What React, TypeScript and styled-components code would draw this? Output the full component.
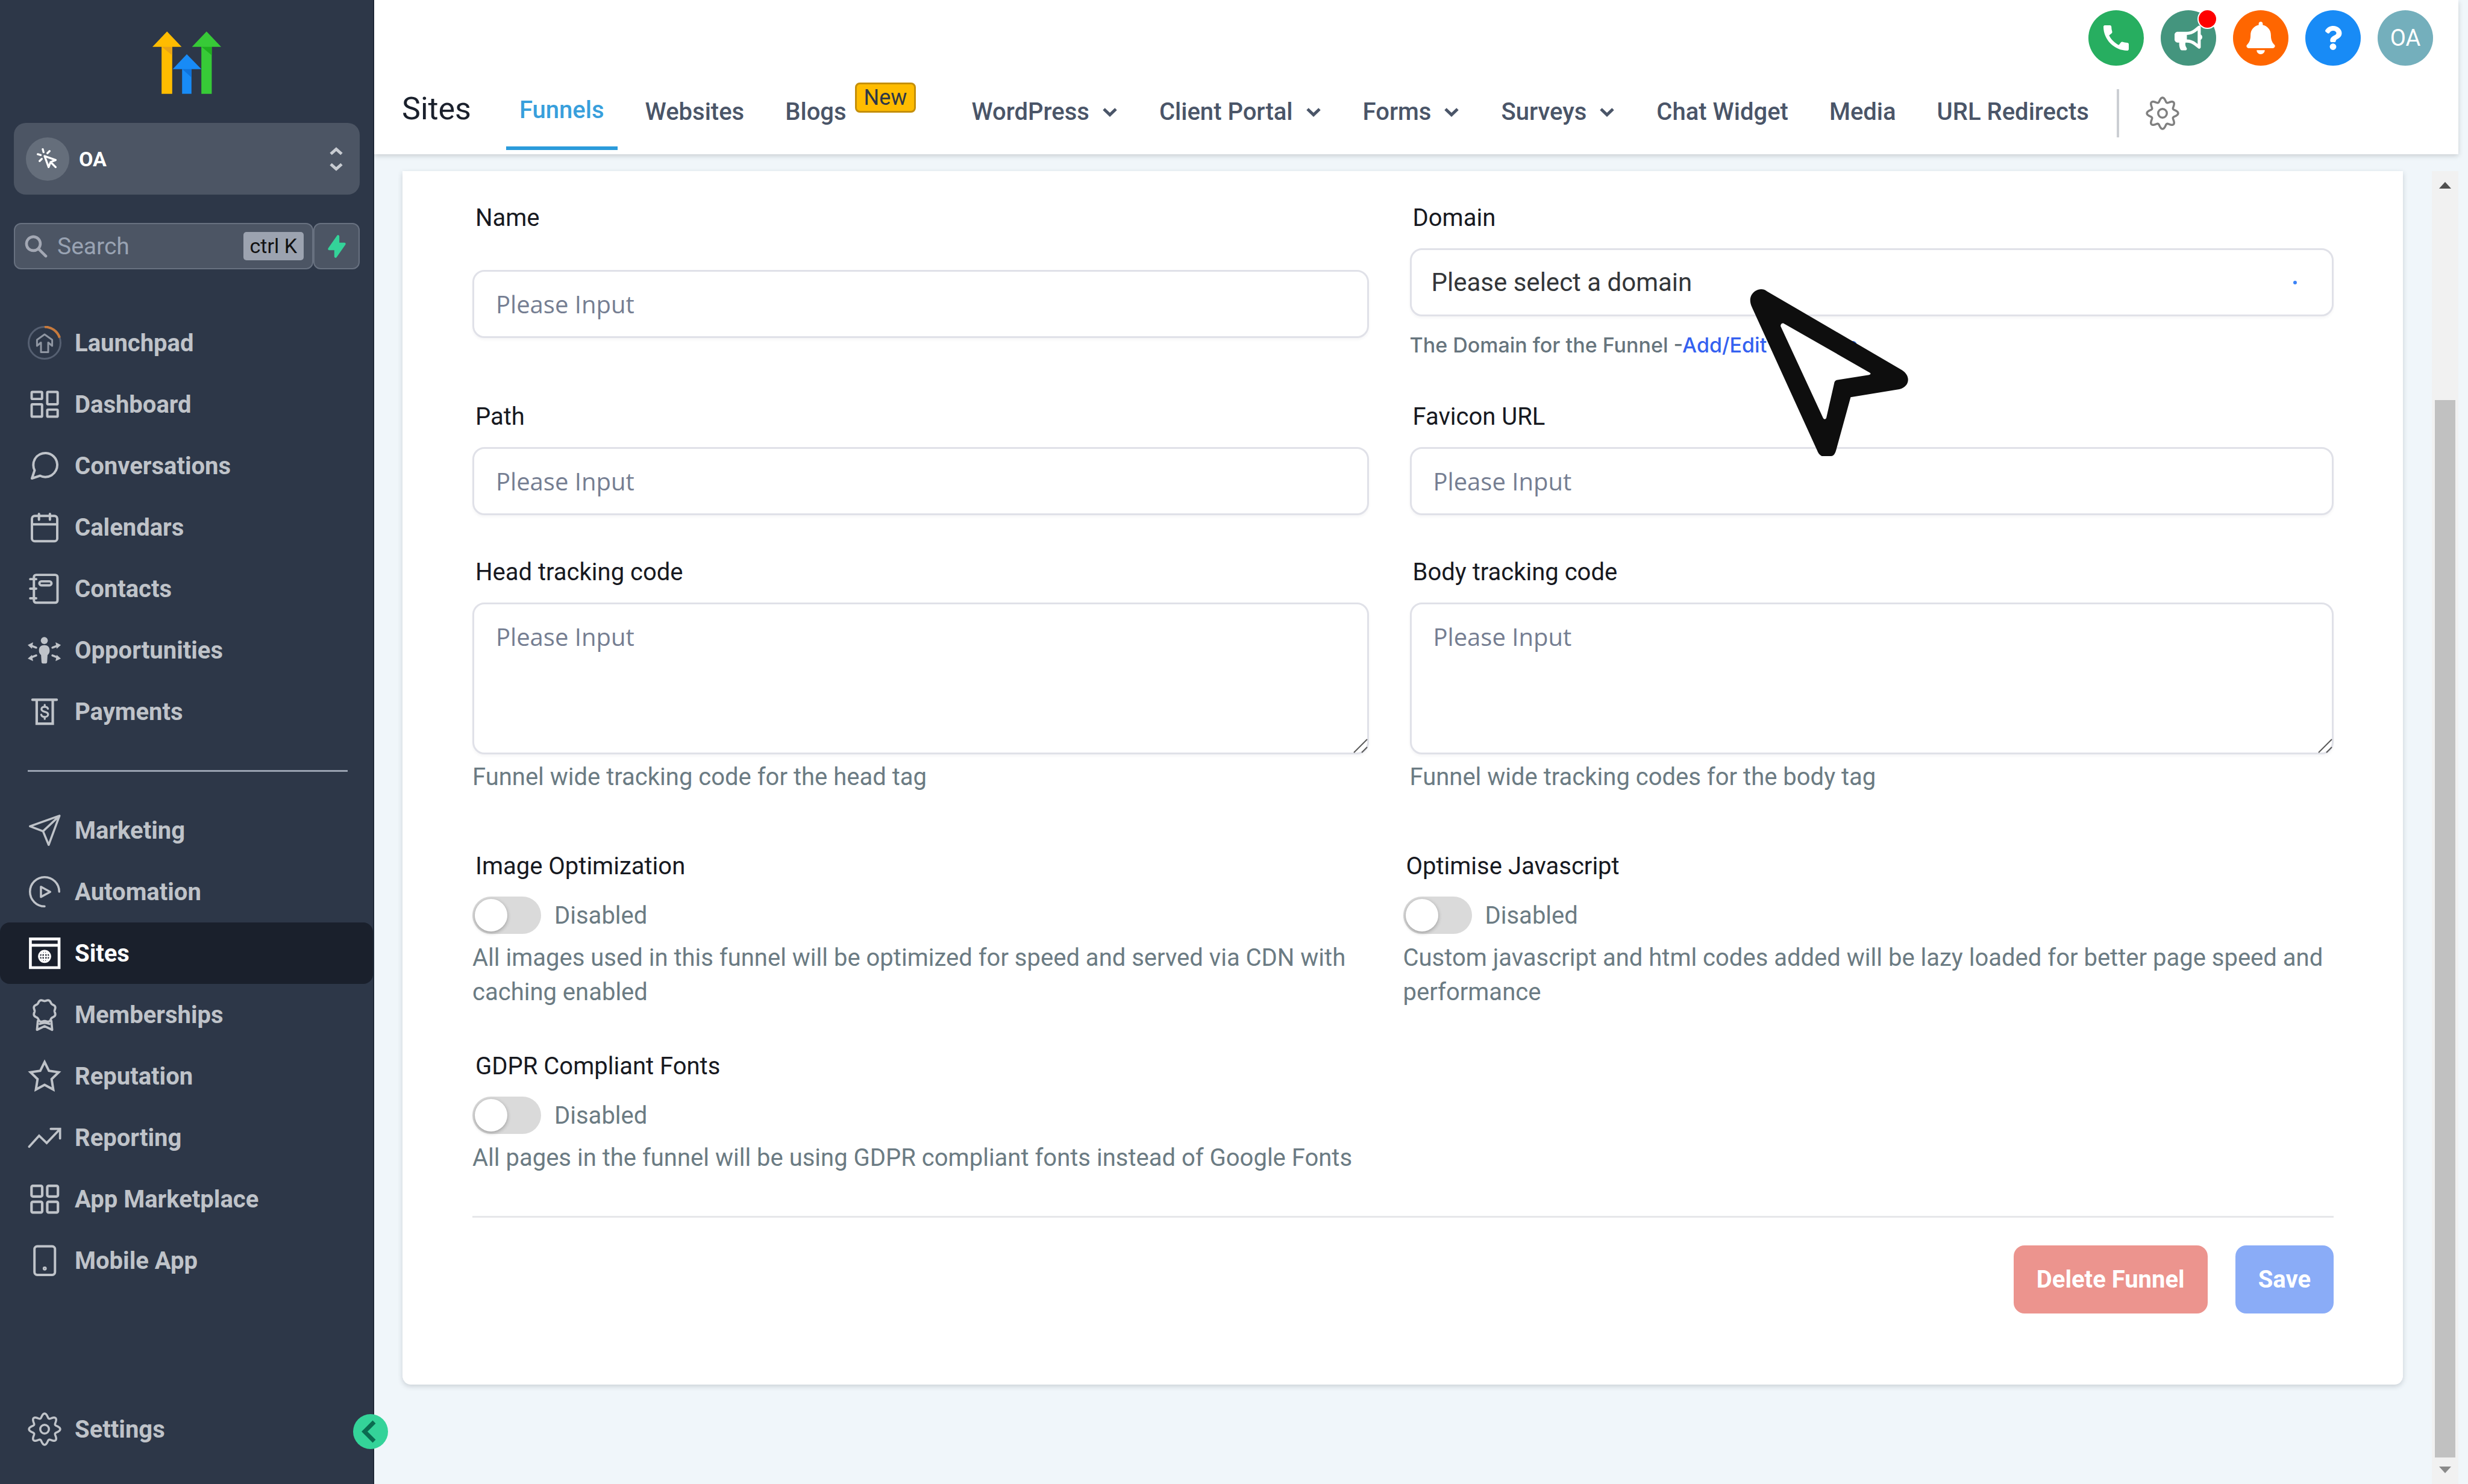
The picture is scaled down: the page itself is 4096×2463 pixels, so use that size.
import React from "react";
import styled, { createGlobalStyle, css } from "styled-components";
import { HiOutlineCursorClick, HiSearch, HiLightningBolt } from "react-icons/hi";
import { MdCall } from "react-icons/md";
import { FaBullhorn, FaBell, FaQuestion } from "react-icons/fa";

const Global = createGlobalStyle`
  *, *::before, *::after { box-sizing: border-box; }
  body {
    margin: 0;
    background: #f0f6fa;
    font-family: Roboto, "Liberation Sans", sans-serif;
    color: #1a202c;
  }
  button, input, select, textarea { font: inherit; margin: 0; }
  a { color: inherit; text-decoration: none; }
`;

/* ---------- shell ---------- */

const Shell = styled.div`
  display: flex;
  min-height: 100vh;
`;

const Sidebar = styled.aside`
  position: relative;
  z-index: 2;
  display: flex;
  flex-direction: column;
  flex: 0 0 621px;
  min-width: 0;
  padding: 52px 0 40px;
  background: #2d3748;
  border-right: 2px solid #1f2937;
`;

const LogoLink = styled.a`
  display: flex;
  justify-content: center;
  height: 104px;
`;

const SidebarTools = styled.div`
  display: flex;
  flex-direction: column;
  gap: 47px;
  padding: 48px 22px 71px 23px;
`;

const AccountButton = styled.button`
  display: flex;
  align-items: center;
  gap: 16px;
  height: 119px;
  padding: 0 26px 0 20px;
  border: 0;
  border-radius: 20px;
  background: #4c5564;
  color: #fff;
  font-size: 34px;
  font-weight: 700;
`;

const AccountAvatar = styled.span`
  display: grid;
  place-items: center;
  width: 72px;
  height: 72px;
  border-radius: 50%;
  background: #656e7b;
`;

const AccountName = styled.span`
  flex: 1;
  text-align: left;
`;

const SearchRow = styled.div`
  display: flex;
  height: 77px;
`;

const SearchBox = styled.label`
  display: flex;
  align-items: center;
  gap: 12px;
  flex: 1;
  min-width: 0;
  padding: 0 14px 0 12px;
  border: 2px solid #687180;
  border-radius: 12px;
  background: #4c5564;
  color: #a3a8b4;
  svg { flex: none; }
`;

const SearchInput = styled.input`
  flex: 1;
  width: 100%;
  min-width: 0;
  padding: 0;
  border: 0;
  outline: 0;
  background: transparent;
  color: #fff;
  font-size: 39px;
  &::placeholder { color: #99a3b3; opacity: 1; }
`;

const Shortcut = styled.kbd`
  flex: none;
  padding: 0 11px;
  border-radius: 5px;
  background: #9ca3b0;
  color: #111;
  font-family: inherit;
  font-size: 34px;
  line-height: 47px;
`;

const QuickButton = styled.button`
  display: grid;
  place-items: center;
  width: 77px;
  padding: 0;
  border: 2px solid #687180;
  border-radius: 12px;
  background: #4c5564;
  color: #34d399;
`;

const NavList = styled.nav`
  display: flex;
  flex-direction: column;
`;

const NavLink = styled.a<{ $active?: boolean }>`
  display: flex;
  align-items: center;
  gap: 22px;
  height: 102px;
  padding-left: 46px;
  border-radius: 16px;
  color: #bfc3c9;
  font-size: 40px;
  font-weight: 700;
  ${(p) => p.$active && css`
    background: #1a202c;
    color: #fff;
  `}
`;

const NavDivider = styled.hr`
  height: 3px;
  margin: 46px 42px 46px 46px;
  border: 0;
  background: #98a1b0;
`;

const SidebarFooter = styled.div`
  margin-top: auto;
`;

const CollapseButton = styled.button`
  position: absolute;
  right: -25px;
  bottom: 58px;
  display: grid;
  place-items: center;
  width: 58px;
  height: 58px;
  padding: 0;
  border: 0;
  border-radius: 50%;
  background: #34d399;
`;

/* ---------- header ---------- */

const Main = styled.div`
  display: flex;
  flex-direction: column;
  flex: 1;
  min-width: 0;
  margin-right: 16px;
`;

const Header = styled.header`
  position: relative;
  z-index: 1;
  padding: 17px 0 7px 46px;
  background: #fff;
  box-shadow: 0 3px 8px rgba(0, 0, 0, 0.16);
`;

const HeaderActions = styled.div`
  display: flex;
  justify-content: flex-end;
  gap: 28px;
  padding-right: 42px;
`;

const RoundButton = styled.button<{ $bg: string }>`
  position: relative;
  display: grid;
  place-items: center;
  width: 92px;
  height: 92px;
  padding: 0;
  border: 0;
  border-radius: 50%;
  background: ${(p) => p.$bg};
  color: #fff;
  font-size: 38px;
`;

const AlertDot = styled.span`
  position: absolute;
  top: -2px;
  right: -2px;
  width: 33px;
  height: 33px;
  border: 2px solid #fff;
  border-radius: 50%;
  background: #f00;
`;

const TabBar = styled.div`
  display: flex;
  align-items: flex-end;
  height: 140px;
`;

const Title = styled.h1`
  margin: 0 58px 0 0;
  font-size: 52px;
  font-weight: 400;
  line-height: 136px;
`;

const Tabs = styled.nav`
  display: flex;
  gap: 24px;
`;

const Tab = styled.a<{ $active?: boolean }>`
  display: flex;
  align-items: center;
  height: 128px;
  padding: 0 22px;
  color: #4a5568;
  font-size: 40px;
  font-weight: 500;
  white-space: nowrap;
  ${(p) => p.$active && css`
    border-bottom: 6px solid #2b9bdb;
    color: #389fdc;
  `}
`;

const TabCaret = styled.svg`
  width: 28px;
  height: 28px;
  margin-left: 20px;
`;

const TabGroup = styled.div`
  display: flex;
  padding-right: 46px;
`;

const NewBadge = styled.span`
  align-self: flex-start;
  margin-top: 16px;
  margin-left: -8px;
  padding: 0 12px;
  border: 3px solid #c58f09;
  border-radius: 8px;
  background: #ffbc00;
  color: #2d3748;
  font-size: 36px;
  line-height: 44px;
`;

const TabSettings = styled.button`
  display: flex;
  align-items: center;
  height: 80px;
  margin: 0 0 21px 24px;
  padding: 0 0 0 44px;
  border: 0;
  border-left: 4px solid #cbced3;
  background: transparent;
  color: #808080;
`;

/* ---------- content ---------- */

const Content = styled.div`
  display: flex;
  flex: 1;
  gap: 48px;
  padding: 28px 0 0 47px;
`;

const Card = styled.form`
  flex: 1;
  min-width: 0;
  align-self: flex-start;
  padding: 50px 115px 118px 116px;
  border-radius: 0 0 14px 14px;
  background: #fff;
  box-shadow: 0 3px 8px rgba(45, 55, 72, 0.2);
`;

const FieldGrid = styled.div`
  display: grid;
  grid-template-columns: 1fr 1fr;
  row-gap: 67px;
`;

const SwitchGrid = styled(FieldGrid)`
  margin-top: 92px;
`;

const Field = styled.div<{ $side: "left" | "right" }>`
  display: flex;
  flex-direction: column;
  ${(p) => (p.$side === "left" ? "padding-right: 57px;" : "padding-left: 11px;")}
`;

const FieldLabel = styled.label<{ $roomy?: boolean }>`
  margin-bottom: ${(p) => (p.$roomy ? 58 : 22)}px;
  padding-left: 5px;
  color: #17191f;
  font-size: 40px;
  line-height: 56px;
`;

const control = css`
  width: 100%;
  border: 3px solid #e0e1e8;
  border-radius: 20px;
  background: #fff;
  box-shadow: 0 3px 4px rgba(16, 24, 40, 0.04);
`;

const TextInput = styled.input`
  ${control}
  height: 113px;
  padding: 0 36px;
  outline: 0;
  font-family: "Open Sans", "Noto Sans", sans-serif;
  font-size: 40px;
  &::placeholder { color: #757e92; opacity: 1; }
`;

const AreaWrap = styled.div`
  position: relative;
  display: flex;
`;

const TextArea = styled.textarea`
  ${control}
  height: 252px;
  padding: 26px 36px;
  outline: 0;
  resize: none;
  font-family: "Open Sans", "Noto Sans", sans-serif;
  font-size: 40px;
  line-height: 56px;
  &::placeholder { color: #757e92; opacity: 1; }
`;

const AreaGrip = styled.svg`
  position: absolute;
  right: 2px;
  bottom: 2px;
  width: 24px;
  height: 24px;
`;

const SelectWrap = styled.div`
  ${control}
  position: relative;
  display: flex;
  align-items: center;
  height: 113px;
  padding: 0 58px 0 33px;
`;

const Select = styled.select`
  flex: 1;
  height: 100%;
  padding: 0;
  border: 0;
  outline: 0;
  appearance: none;
  background: transparent;
  color: #333639;
  font-size: 42px;
`;

const LoadingDot = styled.span`
  width: 6px;
  height: 6px;
  border-radius: 3px;
  background: #3b82f6;
`;

const Pointer = styled.svg`
  position: absolute;
  z-index: 3;
  top: 65px;
  left: 561px;
  width: 263px;
  height: 277px;
  pointer-events: none;
`;

const Hint = styled.p`
  margin: 9px 0 0;
  color: #6b7b83;
  font-size: 40px;
  line-height: 57px;
`;

const SmallHint = styled.p`
  margin: 24px 0 0;
  color: #66747d;
  font-family: Inter, Roboto, sans-serif;
  font-size: 34px;
  font-weight: 500;
  line-height: 48px;
`;

const HintLink = styled.a`
  color: #3461f0;
`;

const SwitchField = styled.div`
  display: flex;
  flex-direction: column;
`;

const SwitchRow = styled.label`
  display: flex;
  align-items: center;
  gap: 22px;
  height: 62px;
  margin-bottom: 2px;
  color: #6b7b83;
  font-size: 40px;
`;

const SwitchInput = styled.input`
  appearance: none;
  width: 114px;
  height: 62px;
  padding: 4px;
  border-radius: 31px;
  background: #dadada;
  &::before {
    content: "";
    display: block;
    width: 54px;
    height: 54px;
    border-radius: 50%;
    background: #fff;
    box-shadow: 0 2px 6px rgba(0, 0, 0, 0.3);
  }
`;

const Actions = styled.div`
  display: flex;
  justify-content: flex-end;
  gap: 46px;
  margin-top: 68px;
  padding-top: 46px;
  border-top: 3px solid #e6e7ea;
`;

const ActionButton = styled.button<{ $bg: string }>`
  height: 113px;
  padding: 0 38px;
  border: 0;
  border-radius: 18px;
  background: ${(p) => p.$bg};
  color: #fff;
  font-size: 40px;
  font-weight: 700;
`;

const ScrollTrack = styled.div`
  display: flex;
  flex-direction: column;
  align-items: center;
  width: 44px;
  background: #f1f1f1;
`;

const ScrollArrow = styled.svg`
  flex: 0 0 44px;
  width: 44px;
`;

const ScrollGap = styled.div`
  flex: 336;
`;

const ScrollThumb = styled.div`
  flex: 1756;
  width: 34px;
  background: #c1c1c1;
`;

/* ---------- drawings ---------- */

const wave = (cx: number, cy: number, base: number, amp: number, lobes: number, phase = 0) => {
  const pts: string[] = [];
  for (let i = 0; i < 240; i++) {
    const t = (i / 240) * Math.PI * 2;
    const r = base + amp * Math.cos(lobes * t + phase);
    pts.push(`${(cx + r * Math.sin(t)).toFixed(2)} ${(cy - r * Math.cos(t)).toFixed(2)}`);
  }
  return `M${pts.join("L")}Z`;
};

const Gear = ({ size }: { size: number }) => (
  <svg width={size} height={size} viewBox="0 0 24 24" fill="none" stroke="currentColor" strokeWidth="1.5" strokeLinejoin="round">
    <path d={wave(12, 12, 9.6, 1.5, 8)} />
    <circle cx="12" cy="12" r="3.1" />
  </svg>
);

const Icon = ({ children, sw = 1.7 }: { children: React.ReactNode; sw?: number }) => (
  <svg
    width="56"
    height="56"
    viewBox="0 0 24 24"
    fill="none"
    stroke="currentColor"
    strokeWidth={sw}
    strokeLinecap="round"
    strokeLinejoin="round"
    overflow="visible"
  >
    {children}
  </svg>
);

const icons: Record<string, React.ReactNode> = {
  launchpad: (
    <svg width="56" height="56" viewBox="0 0 56 56" fill="none" strokeWidth="3">
      <circle cx="28" cy="28" r="26.5" stroke="#566072" />
      <path d="M28 1.5A26.5 26.5 0 0 1 53 19.5" stroke="#c87a3c" strokeWidth="4" />
      <path d="M28 14L40.6 23V33L34 27.5V43.5H22V27.5L15.4 33V23Z" stroke="#8f96a2" strokeLinejoin="round" />
    </svg>
  ),
  dashboard: (
    <Icon>
      <rect x="2.8" y="3.2" width="7.4" height="5" rx=".6" />
      <rect x="13.9" y="3.2" width="7.4" height="8.8" rx=".6" />
      <rect x="2.8" y="12" width="7.4" height="8.8" rx=".6" />
      <rect x="13.9" y="15.8" width="7.4" height="5" rx=".6" />
    </Icon>
  ),
  conversations: (
    <Icon>
      <path d="M21 11.5a8.38 8.38 0 0 1-.9 3.8 8.5 8.5 0 0 1-7.6 4.7 8.38 8.38 0 0 1-3.8-.9L3 21l1.9-5.7a8.38 8.38 0 0 1-.9-3.8 8.5 8.5 0 0 1 4.7-7.6 8.38 8.38 0 0 1 3.8-.9h.5a8.48 8.48 0 0 1 8 8v.5z" />
    </Icon>
  ),
  calendars: (
    <Icon>
      <rect x="3" y="4" width="18" height="18" rx="2" />
      <path d="M8 2.6v4M15.8 2.6v4M3 10h18" />
    </Icon>
  ),
  contacts: (
    <Icon>
      <rect x="4.4" y="2.2" width="16.8" height="19.8" rx="1.6" />
      <path d="M1.8 5.2h4.2M1.8 12h4.2M1.8 18.9h4.2" />
      <rect x="8.3" y="6.8" width="8.6" height="2.8" rx="1.4" />
    </Icon>
  ),
  opportunities: (
    <Icon sw={1.5}>
      <g fill="currentColor" stroke="none">
        <circle cx="11.8" cy="5.2" r="2.5" />
        <path d="M8 12.4c0-2.6 1.4-3.9 3.8-3.9s3.8 1.3 3.8 3.9c0 1.6-.8 2.5-1.5 3.1l-.3 5c0 .6-.4 1-1 1h-2c-.6 0-1-.4-1-1l-.3-5c-.7-.6-1.5-1.5-1.5-3.1z" />
        <path d="M23.6 8.4l-3.8-2 .8 4.6zM0 8.4l3.8-2-.8 4.6zM23.6 18l-3.8 1.8.8-4.4zM0 18l3.8 1.8-.8-4.4z" />
      </g>
      <path d="M17.6 10.2l3.6-1.4M6 10.2L2.4 8.8M17.6 15.8l3.6 1.4M6 15.8l-3.6 1.4" />
    </Icon>
  ),
  payments: (
    <Icon sw={1.8}>
      <path d="M3.4 3.6h17.2M6.4 3.6v17h11.4v-17" strokeLinejoin="miter" />
      <path d="M14.4 10c-.3-1-1.2-1.4-2.3-1.4-1.3 0-2.3.6-2.3 1.7 0 2.5 4.7 1.2 4.7 3.7 0 1.1-1 1.8-2.4 1.8-1.2 0-2.2-.5-2.5-1.6M12.1 7.2v1.4M12.1 15.8v1.4" strokeWidth="1.4" />
    </Icon>
  ),
  marketing: (
    <Icon sw={1.5}>
      <path d="M22.6 1.7L1.6 9.2l9.3 3.5 4 9.7zM10.9 12.7L22.6 1.7" />
    </Icon>
  ),
  automation: (
    <Icon sw={1.5}>
      <path d="M22.4 12A10.4 10.4 0 1 0 12 22.4" />
      <path d="M9.4 8.5v7.2l6.6-3.6z" />
    </Icon>
  ),
  sites: (
    <Icon sw={2}>
      <path d="M1.9 1.9h20.4v20.4H1.9zM1.9 6.4h20.4" strokeLinejoin="miter" />
      <circle cx="12" cy="14.3" r="4" strokeWidth="1.3" />
      <path d="M8 14.3h8M12 10.3v8M9.4 12.2h5.2M9.4 16.4h5.2" strokeWidth="1" />
      <ellipse cx="12" cy="14.3" rx="2" ry="4" strokeWidth=".8" />
    </Icon>
  ),
  memberships: (
    <Icon sw={1.6}>
      <path d={wave(12, 9.4, 7.6, 0.5, 8, Math.PI)} />
      <path d="M7.2 16.4L6.6 22.8 12 20.2l5.4 2.6-.6-6.4M8.6 18.6c2.2-1 4.6-1 6.8 0" />
    </Icon>
  ),
  reputation: (
    <Icon>
      <path d="M12 2L15.09 8.26 22 9.27 17 14.14 18.18 21.52 12 18.17 5.82 21.52 7 14.14 2 9.27 8.91 8.26Z" strokeLinejoin="miter" />
    </Icon>
  ),
  reporting: (
    <Icon sw={1.6}>
      <path d="M1 18.5L8.1 10.7 13.5 15.9 23 5.9M16.4 5.8H23v6.8" strokeLinejoin="miter" />
    </Icon>
  ),
  apps: (
    <Icon sw={1.8}>
      <rect x="2.7" y="2.6" width="7.6" height="7.6" rx="1" />
      <rect x="13.9" y="2.6" width="7.6" height="7.6" rx="1" />
      <rect x="2.7" y="14" width="7.6" height="7.6" rx="1" />
      <rect x="13.9" y="14" width="7.6" height="7.6" rx="1" />
    </Icon>
  ),
  mobile: (
    <Icon>
      <rect x="4.8" y="1.9" width="14.6" height="20.4" rx="2" />
      <circle cx="12.1" cy="17.7" r=".6" />
    </Icon>
  ),
};

const Logo = () => (
  <svg width="114" height="104" viewBox="0 0 278 252">
    <path d="M59 0L118 62H0Z" fill="#ffbc00" />
    <path d="M37 60H80V252H37Z" fill="#ffbc00" />
    <path d="M38 62H80V96Z" fill="#e8a317" />
    <path d="M219 0L278 62H160Z" fill="#37ca37" />
    <path d="M198 60H240V252H198Z" fill="#37ca37" />
    <path d="M199 62H240V96Z" fill="#1fae1f" />
    <path d="M139 92L198 152H82Z" fill="#188bf6" />
    <path d="M120 150H158V252H120Z" fill="#188bf6" />
    <path d="M121 152H158V186Z" fill="#0f73db" />
  </svg>
);

const Updown = () => (
  <svg width="26" height="46" viewBox="0 0 26 46" fill="none" stroke="#c8ccd2" strokeWidth="5">
    <path d="M4 14.5L13 6.5 22 14.5M4 31.5L13 39.5 22 31.5" />
  </svg>
);

const Caret = () => (
  <TabCaret viewBox="0 0 28 28" fill="none" stroke="currentColor" strokeWidth="5">
    <path d="M4 10L14 19.5 24 10" />
  </TabCaret>
);

/* ---------- page ---------- */

const primary: [string, string][] = [
  ["launchpad", "Launchpad"],
  ["dashboard", "Dashboard"],
  ["conversations", "Conversations"],
  ["calendars", "Calendars"],
  ["contacts", "Contacts"],
  ["opportunities", "Opportunities"],
  ["payments", "Payments"],
];

const secondary: [string, string][] = [
  ["marketing", "Marketing"],
  ["automation", "Automation"],
  ["sites", "Sites"],
  ["memberships", "Memberships"],
  ["reputation", "Reputation"],
  ["reporting", "Reporting"],
  ["apps", "App Marketplace"],
  ["mobile", "Mobile App"],
];

const Toggle = ({ id, label, text }: { id: string; label: string; text: string }) => (
  <SwitchField>
    <FieldLabel htmlFor={id}>{label}</FieldLabel>
    <SwitchRow>
      <SwitchInput type="checkbox" id={id} />
      Disabled
    </SwitchRow>
    <Hint>{text}</Hint>
  </SwitchField>
);

const Area = ({ id }: { id: string }) => (
  <AreaWrap>
    <TextArea id={id} placeholder="Please Input" />
    <AreaGrip viewBox="0 0 24 24" stroke="#5a5a5a" strokeWidth="2">
      <path d="M1 23L23 1M14 23L23 14" />
    </AreaGrip>
  </AreaWrap>
);

export default function App() {
  return (
    <Shell>
      <Global />
      <Sidebar>
        <LogoLink href="#" aria-label="Home">
          <Logo />
        </LogoLink>
        <SidebarTools>
          <AccountButton type="button">
            <AccountAvatar>
              <HiOutlineCursorClick size={40} />
            </AccountAvatar>
            <AccountName>OA</AccountName>
            <Updown />
          </AccountButton>
          <SearchRow>
            <SearchBox>
              <HiSearch size={46} />
              <SearchInput placeholder="Search" aria-label="Search" />
              <Shortcut>ctrl K</Shortcut>
            </SearchBox>
            <QuickButton type="button" aria-label="Quick actions">
              <HiLightningBolt size={42} />
            </QuickButton>
          </SearchRow>
        </SidebarTools>
        <NavList>
          {primary.map(([icon, name]) => (
            <NavLink href="#" key={icon}>
              {icons[icon]}
              {name}
            </NavLink>
          ))}
        </NavList>
        <NavDivider />
        <NavList>
          {secondary.map(([icon, name]) => (
            <NavLink href="#" key={icon} $active={icon === "sites"}>
              {icons[icon]}
              {name}
            </NavLink>
          ))}
        </NavList>
        <SidebarFooter>
          <NavLink href="#">
            <Gear size={56} />
            Settings
          </NavLink>
        </SidebarFooter>
        <CollapseButton type="button" aria-label="Collapse sidebar">
          <svg width="58" height="58" viewBox="0 0 58 58" fill="none" stroke="#0b6b50" strokeWidth="7">
            <path d="M35 13L19 29 35 45" />
          </svg>
        </CollapseButton>
      </Sidebar>

      <Main>
        <Header>
          <HeaderActions>
            <RoundButton type="button" $bg="#27ae60" aria-label="Call">
              <MdCall size={56} />
            </RoundButton>
            <RoundButton type="button" $bg="#44957e" aria-label="Announcements">
              <FaBullhorn size={46} />
              <AlertDot />
            </RoundButton>
            <RoundButton type="button" $bg="#ff6600" aria-label="Notifications">
              <FaBell size={54} />
            </RoundButton>
            <RoundButton type="button" $bg="#188bf6" aria-label="Help">
              <FaQuestion size={40} />
            </RoundButton>
            <RoundButton type="button" $bg="#74afbc">OA</RoundButton>
          </HeaderActions>
          <TabBar>
            <Title>Sites</Title>
            <Tabs>
              <Tab href="#" $active>Funnels</Tab>
              <Tab href="#">Websites</Tab>
              <TabGroup>
                <Tab href="#">Blogs</Tab>
                <NewBadge>New</NewBadge>
              </TabGroup>
              <Tab href="#">WordPress<Caret /></Tab>
              <Tab href="#">Client Portal<Caret /></Tab>
              <Tab href="#">Forms<Caret /></Tab>
              <Tab href="#">Surveys<Caret /></Tab>
              <Tab href="#">Chat Widget</Tab>
              <Tab href="#">Media</Tab>
              <Tab href="#">URL Redirects</Tab>
            </Tabs>
            <TabSettings type="button" aria-label="Site settings">
              <Gear size={56} />
            </TabSettings>
          </TabBar>
        </Header>

        <Content>
          <Card>
            <FieldGrid>
              <Field $side="left">
                <FieldLabel htmlFor="name" $roomy>Name</FieldLabel>
                <TextInput id="name" placeholder="Please Input" />
              </Field>
              <Field $side="right">
                <FieldLabel htmlFor="domain">Domain</FieldLabel>
                <SelectWrap>
                  <Select id="domain">
                    <option>Please select a domain</option>
                  </Select>
                  <LoadingDot />
                  <Pointer viewBox="113 67 793 836">
                    <path
                      fill="#0e0e0e"
                      d="M200 78L875 472C920 500 915 555 862 568L618 608 546 870C541 890 533 903 520 903H473C462 897 455 888 449 872L124 158C108 125 113 95 140 76 160 65 180 63 200 78Z"
                    />
                    <path fill="#fff" d="M282 238C272 237 267 243 267 252L480 712C484 720 492 720 496 712L537 532Q540 524 548 522L710 496C720 494 720 488 712 484Z" />
                  </Pointer>
                </SelectWrap>
                <SmallHint>
                  The Domain for the Funnel -<HintLink href="#">Add/Edit Domains</HintLink>
                </SmallHint>
              </Field>

              <Field $side="left">
                <FieldLabel htmlFor="path">Path</FieldLabel>
                <TextInput id="path" placeholder="Please Input" />
              </Field>
              <Field $side="right">
                <FieldLabel htmlFor="favicon">Favicon URL</FieldLabel>
                <TextInput id="favicon" placeholder="Please Input" />
              </Field>

              <Field $side="left">
                <FieldLabel htmlFor="head">Head tracking code</FieldLabel>
                <Area id="head" />
                <Hint>Funnel wide tracking code for the head tag</Hint>
              </Field>
              <Field $side="right">
                <FieldLabel htmlFor="body">Body tracking code</FieldLabel>
                <Area id="body" />
                <Hint>Funnel wide tracking codes for the body tag</Hint>
              </Field>
            </FieldGrid>
            <SwitchGrid>
              <Toggle
                id="images"
                label="Image Optimization"
                text="All images used in this funnel will be optimized for speed and served via CDN with caching enabled"
              />
              <Toggle
                id="javascript"
                label="Optimise Javascript"
                text="Custom javascript and html codes added will be lazy loaded for better page speed and performance"
              />
              <Toggle
                id="gdpr"
                label="GDPR Compliant Fonts"
                text="All pages in the funnel will be using GDPR compliant fonts instead of Google Fonts"
              />
            </SwitchGrid>
            <Actions>
              <ActionButton type="button" $bg="#ec948e">Delete Funnel</ActionButton>
              <ActionButton type="button" $bg="#8aacf7">Save</ActionButton>
            </Actions>
          </Card>
          <ScrollTrack aria-hidden>
            <ScrollArrow viewBox="0 0 44 44">
              <path d="M22 18L32 29H12Z" fill="#505050" />
            </ScrollArrow>
            <ScrollGap />
            <ScrollThumb />
            <ScrollArrow viewBox="0 0 44 44">
              <path d="M22 26L32 15H12Z" fill="#8a8a8a" />
            </ScrollArrow>
          </ScrollTrack>
        </Content>
      </Main>
    </Shell>
  );
}
